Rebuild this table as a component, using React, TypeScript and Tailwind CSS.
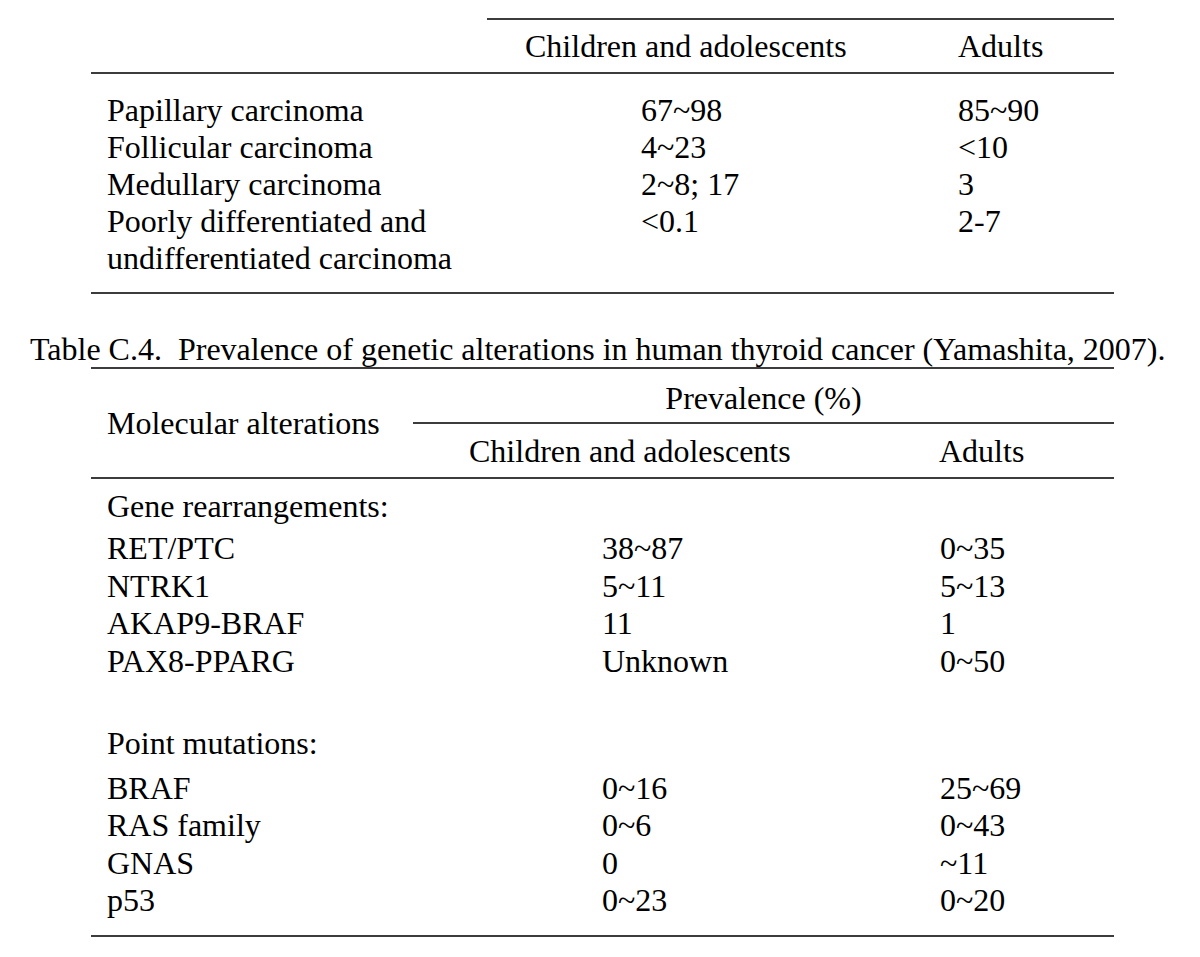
const histology: [string, string, string][] = [
  ["Papillary carcinoma", "67~98", "85~90"],
  ["Follicular carcinoma", "4~23", "<10"],
  ["Medullary carcinoma", "2~8; 17", "3"],
];

const rearrangements: [string, string, string][] = [
  ["RET/PTC", "38~87", "0~35"],
  ["NTRK1", "5~11", "5~13"],
  ["AKAP9-BRAF", "11", "1"],
  ["PAX8-PPARG", "Unknown", "0~50"],
];

const mutations: [string, string, string][] = [
  ["BRAF", "0~16", "25~69"],
  ["RAS family", "0~6", "0~43"],
  ["GNAS", "0", "~11"],
  ["p53", "0~23", "0~20"],
];

function Rule({ className = "" }: { className?: string }) {
  return <div className={`h-[2px] bg-[#3c3c3c] ${className}`} />;
}

function HistologyTable() {
  return (
    <div className="ml-[91px] w-[1023px]">
      <Rule className="ml-[396px]" />
      <div className="flex h-[52px] items-center">
        <span className="ml-[434px] w-[433px]">Children and adolescents</span>
        <span>Adults</span>
      </div>
      <Rule />
      <div className="pt-[18px] pb-[15px] leading-[37px]">
        {histology.map(([name, kids, adults]) => (
          <div key={name} className="grid grid-cols-[550px_317px_1fr]">
            <span className="pl-4">{name}</span>
            <span>{kids}</span>
            <span>{adults}</span>
          </div>
        ))}
        <div className="grid grid-cols-[550px_317px_1fr]">
          <span className="pl-4">
            Poorly differentiated and
            <br />
            undifferentiated carcinoma
          </span>
          <span>&lt;0.1</span>
          <span>2-7</span>
        </div>
      </div>
      <Rule />
    </div>
  );
}

function GeneRows({ rows }: { rows: [string, string, string][] }) {
  return (
    <div className="leading-[37.5px]">
      {rows.map(([name, kids, adults]) => (
        <div key={name} className="grid grid-cols-[511px_338px_1fr]">
          <span className="pl-4">{name}</span>
          <span>{kids}</span>
          <span>{adults}</span>
        </div>
      ))}
    </div>
  );
}

function GeneticsTable() {
  return (
    <div className="ml-[91px] w-[1023px]">
      <Rule />
      <div className="grid grid-cols-[322px_1fr]">
        <div className="flex items-center pl-4">Molecular alterations</div>
        <div>
          <div className="flex h-[53px] items-center justify-center pt-1">Prevalence (%)</div>
          <Rule />
          <div className="flex h-[53px] items-center">
            <span className="ml-[56px] w-[470px]">Children and adolescents</span>
            <span>Adults</span>
          </div>
        </div>
      </div>
      <Rule />
      <div className="pt-[9px] pb-[15px]">
        <div className="pl-4 leading-[37px]">Gene rearrangements:</div>
        <div className="mt-[5px]">
          <GeneRows rows={rearrangements} />
        </div>
        <div className="mt-[44.5px] pl-4 leading-[37.5px]">Point mutations:</div>
        <div className="mt-[7.5px]">
          <GeneRows rows={mutations} />
        </div>
      </div>
      <Rule />
    </div>
  );
}

export default function App() {
  return (
    <div className="min-h-[957px] w-[1200px] bg-white pt-[18px] font-['Liberation_Serif','Times_New_Roman',serif] text-[32px] text-black">
      <HistologyTable />
      <div className="mt-[37px] pl-[30px] leading-[36px] whitespace-pre">
        {"Table C.4.  Prevalence of genetic alterations in human thyroid cancer (Yamashita, 2007)."}
      </div>
      <GeneticsTable />
    </div>
  );
}
